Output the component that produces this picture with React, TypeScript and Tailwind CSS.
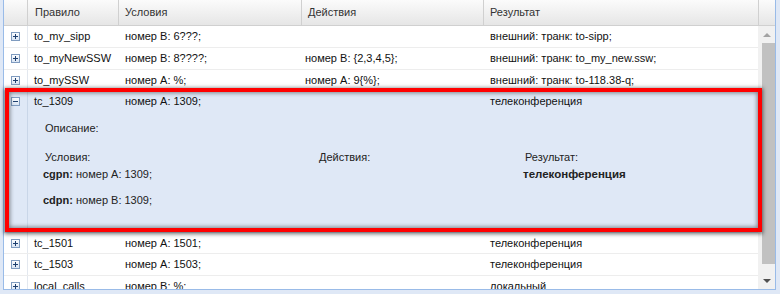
import React from "react";

function Toggle({ open }: { open?: boolean }) {
  return (
    <svg width="9" height="9" viewBox="0 0 9 9" className="block">
      <defs>
        <linearGradient id={open ? "gm" : "gp"} x1="0" y1="0" x2="0" y2="1">
          <stop offset="0" stopColor="#ffffff" />
          <stop offset="1" stopColor="#d6e2f2" />
        </linearGradient>
      </defs>
      <rect x="0.5" y="0.5" width="8" height="8" fill={`url(#${open ? "gm" : "gp"})`} stroke="#7f9bbf" />
      <path d="M2 4.5h5" stroke="#1e3f6e" />
      {!open && <path d="M4.5 2v5" stroke="#1e3f6e" />}
    </svg>
  );
}

type Row = { name: string; cond: string; act: string; res: string; h: string };

const top: Row[] = [
  { name: "to_my_sipp", cond: "номер В: 6???;", act: "", res: "внешний: транк: to-sipp;", h: "h-[22px]" },
  { name: "to_myNewSSW", cond: "номер В: 8????;", act: "номер В: {2,3,4,5};", res: "внешний: транк: to_my_new.ssw;", h: "h-[22px]" },
  { name: "to_mySSW", cond: "номер А: %;", act: "номер А: 9{%};", res: "внешний: транк: to-118.38-q;", h: "h-[21px]" },
];

const bottom: Row[] = [
  { name: "tc_1501", cond: "номер А: 1501;", act: "", res: "телеконференция", h: "h-[21px]" },
  { name: "tc_1503", cond: "номер А: 1503;", act: "", res: "телеконференция", h: "h-[22px]" },
  { name: "local_calls", cond: "номер В: %;", act: "", res: "локальный", h: "h-[22px]" },
];

function Cells({ r }: { r: Row }) {
  return (
    <>
      <div className="w-[91px] shrink-0 pl-[6px] whitespace-nowrap">{r.name}</div>
      <div className="w-[183px] shrink-0 pl-[6px] whitespace-nowrap">{r.cond}</div>
      <div className="w-[182px] shrink-0 pl-[3px] whitespace-nowrap">{r.act}</div>
      <div className="flex-1 pl-[6px] whitespace-nowrap">{r.res}</div>
    </>
  );
}

function GridRow({ r }: { r: Row }) {
  return (
    <div className={`flex items-center ${r.h} border-b border-[#ededed] shrink-0`}>
      <div className="w-[24px] h-full shrink-0 flex items-center pl-[7px] border-r border-[#e3e8ef]">
        <Toggle />
      </div>
      <Cells r={r} />
    </div>
  );
}

export default function App() {
  const hdr = "h-full flex items-center border-r border-[#d0d0d0] shrink-0";
  return (
    <div className="relative w-[780px] h-[294px] overflow-hidden bg-[#dfe8f6] text-[11px] leading-[13px] text-[#111] font-['Liberation_Sans',Arial,sans-serif]">
      <div className="ml-[3px] w-[773px] h-[290px] bg-white border-x border-b border-[#99bbe8] flex flex-col overflow-hidden">
        {/* header */}
        <div className="flex h-[26px] shrink-0 bg-gradient-to-b from-[#fbfbfb] to-[#e6e6e6] border-b border-[#d0d0d0] text-[#333]">
          <div className={`${hdr} w-[24px]`} />
          <div className={`${hdr} w-[91px] pl-[7px]`}>Правило</div>
          <div className={`${hdr} w-[183px] pl-[6px]`}>Условия</div>
          <div className={`${hdr} w-[182px] pl-[6px]`}>Действия</div>
          <div className={`${hdr} w-[275px] pl-[6px]`}>Результат</div>
          <div className="flex-1" />
        </div>
        {/* body */}
        <div className="flex flex-1 min-h-0">
          <div className="flex-1 flex flex-col overflow-hidden">
            {top.map((r) => (
              <GridRow key={r.name} r={r} />
            ))}
            {/* expanded */}
            <div className="flex h-[142px] shrink-0 bg-[#dfe8f6]">
              <div className="w-[24px] shrink-0 pl-[7px] pt-[6px] border-r border-[#c9d6e8]">
                <Toggle open />
              </div>
              <div className="flex-1 flex flex-col">
                <div className="flex items-center h-[20px]">
                  <Cells r={{ name: "tc_1309", cond: "номер А: 1309;", act: "", res: "телеконференция", h: "" }} />
                </div>
                <div className="mt-[11px] pl-[17px] text-[#222]">Описание:</div>
                <div className="flex mt-[16px] text-[#222]">
                  <div className="w-[291px] shrink-0">
                    <div className="pl-[17px]">Условия:</div>
                    <div className="pl-[15px] mt-[4px]">
                      <b>cgpn:</b> номер А: 1309;
                    </div>
                    <div className="pl-[15px] mt-[13px]">
                      <b>cdpn:</b> номер В: 1309;
                    </div>
                  </div>
                  <div className="w-[206px] shrink-0">Действия:</div>
                  <div>
                    <div>Результат:</div>
                    <div className="-ml-[2px] mt-[4px] font-bold text-[11.5px]">телеконференция</div>
                  </div>
                </div>
              </div>
            </div>
            {bottom.map((r) => (
              <GridRow key={r.name} r={r} />
            ))}
          </div>
          {/* scrollbar */}
          <div className="w-[17px] shrink-0 bg-[#f1f1f1] flex flex-col items-center">
            <div className="h-[17px] w-full flex items-center justify-center">
              <div className="w-0 h-0 border-x-[4px] border-x-transparent border-b-[4px] border-b-[#a3a3a3]" />
            </div>
            <div className="ml-[3px] w-[13px] h-[221px] bg-[#c1c1c1]" />
            <div className="flex-1" />
            <div className="h-[17px] w-full flex items-center justify-center">
              <div className="w-0 h-0 border-x-[4px] border-x-transparent border-t-[4px] border-t-[#505050]" />
            </div>
          </div>
        </div>
      </div>
      {/* red annotation */}
      <div className="absolute left-[5px] top-[88px] w-[757px] h-[144px] border-[4px] border-[#ff0000] shadow-[0_1px_4px_1px_rgba(0,0,0,0.55),inset_0_0_4px_1px_rgba(0,0,0,0.45)]" />
    </div>
  );
}
